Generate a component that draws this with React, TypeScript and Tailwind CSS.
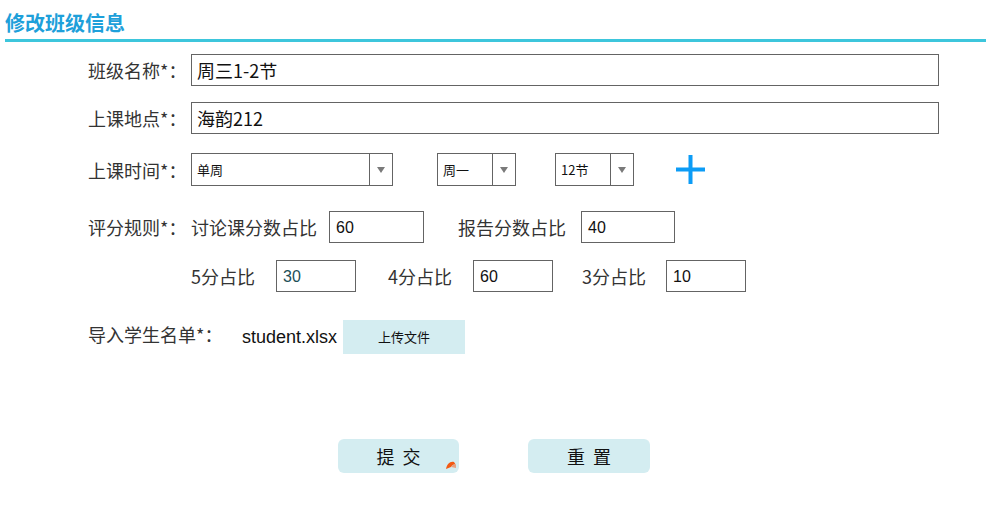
import React from 'react';

const cjk = "font-['Noto_Sans_CJK_SC','Liberation_Sans',sans-serif]";

function TextBox({ value, className = '' }: { value: string; className?: string }) {
  return (
    <div className={`h-[32px] border border-[#646464] bg-white flex items-center pl-[5px] ${className}`}>
      <span className="text-[18px] leading-[20px] text-[#111]">{value}</span>
    </div>
  );
}

function NumBox({ value, className = '', color = 'text-[#111]' }: { value: string; className?: string; color?: string }) {
  return (
    <div className={`h-[32px] border border-[#646464] bg-white flex items-center pl-[6px] pt-[2px] ${className}`}>
      <span className={`font-['Liberation_Sans',sans-serif] text-[16px] leading-[18px] ${color}`}>{value}</span>
    </div>
  );
}

function Select({ value, className = '' }: { value: string; className?: string }) {
  return (
    <div className={`h-[33px] border border-[#646464] bg-white flex ${className}`}>
      <div className="flex-1 flex items-center pl-[5px] text-[13px] leading-[16px] text-[#111]">{value}</div>
      <div className="w-[23px] border-l border-[#646464] flex items-center justify-center">
        <svg width="8" height="6" viewBox="0 0 8 6">
          <path d="M0 0 L8 0 L4 6 Z" fill="#7a7a7a" />
        </svg>
      </div>
    </div>
  );
}

function Label({ text, className = 'w-[103px]' }: { text: string; className?: string }) {
  return <span className={`text-[18px] leading-[20px] text-[#333] shrink-0 whitespace-nowrap ${className}`}>{text}</span>;
}

export default function App() {
  return (
    <div className={`w-[986px] h-[527px] bg-white ${cjk}`}>
      <div className="ml-[5px] pt-[10px] pb-[3px] border-b-[3px] border-[#3dc6dc] text-[20px] leading-[26px] font-bold text-[#1ea0da]">
        修改班级信息
      </div>

      <div className="pl-[88px] pt-[12px]">
        <div className="flex items-center h-[32px]">
          <Label text="班级名称*：" />
          <TextBox value="周三1-2节" className="w-[748px]" />
        </div>

        <div className="flex items-center h-[32px] mt-[16px]">
          <Label text="上课地点*：" />
          <TextBox value="海韵212" className="w-[748px]" />
        </div>

        <div className="flex items-center h-[33px] mt-[19px]">
          <Label text="上课时间*：" />
          <Select value="单周" className="w-[202px]" />
          <Select value="周一" className="w-[79px] ml-[44px]" />
          <Select value="12节" className="w-[79px] ml-[39px]" />
          <svg className="ml-[42px]" width="29" height="29" viewBox="0 0 29 29">
            <rect x="12.5" y="0" width="4" height="29" fill="#0c9cf6" />
            <rect x="0" y="12.5" width="29" height="4" fill="#0c9cf6" />
          </svg>
        </div>

        <div className="flex items-center h-[32px] mt-[25px]">
          <Label text="评分规则*：" />
          <Label text="讨论课分数占比" className="w-[138px]" />
          <NumBox value="60" className="w-[95px]" />
          <Label text="报告分数占比" className="w-[123px] ml-[34px]" />
          <NumBox value="40" className="w-[94px]" />
        </div>

        <div className="flex items-center h-[32px] mt-[17px]">
          <span className="w-[103px] shrink-0" />
          <Label text="5分占比" className="w-[85px]" />
          <NumBox value="30" className="w-[80px]" color="text-[#1d4f57]" />
          <Label text="4分占比" className="w-[85px] ml-[32px]" />
          <NumBox value="60" className="w-[80px]" />
          <Label text="3分占比" className="w-[84px] ml-[29px]" />
          <NumBox value="10" className="w-[80px]" />
        </div>

        <div className="flex items-center h-[34px] mt-[28px]">
          <Label text="导入学生名单*：" className="w-[154px] -mt-[6px]" />
          <span className="w-[101px] font-['Liberation_Sans',sans-serif] text-[18px] leading-[20px] text-[#111]">student.xlsx</span>
          <button className="w-[122px] h-[34px] bg-[#d4edf1] text-[13px] leading-[16px] text-[#111]">上传文件</button>
        </div>

        <div className="flex items-center mt-[85px] ml-[250px]">
          <button className="relative w-[121px] h-[34px] rounded-[6px] bg-[#d4edf1] text-[18px] leading-[20px] text-[#111]">
            提&nbsp;&nbsp;交
            <svg className="absolute right-[2px] bottom-[3px]" width="12" height="10" viewBox="0 0 12 10">
              <path d="M1 9 C2 4 5 1 9 2 L11 5 C9 4 7 5 6 7 Z" fill="#f25a14" />
              <path d="M6 7 C7 5 9 4 11 5 L11 8 Z" fill="#e7a080" />
            </svg>
          </button>
          <button className="w-[122px] h-[34px] ml-[69px] rounded-[6px] bg-[#d4edf1] text-[18px] leading-[20px] text-[#111]">
            重&nbsp;&nbsp;置
          </button>
        </div>
      </div>
    </div>
  );
}
